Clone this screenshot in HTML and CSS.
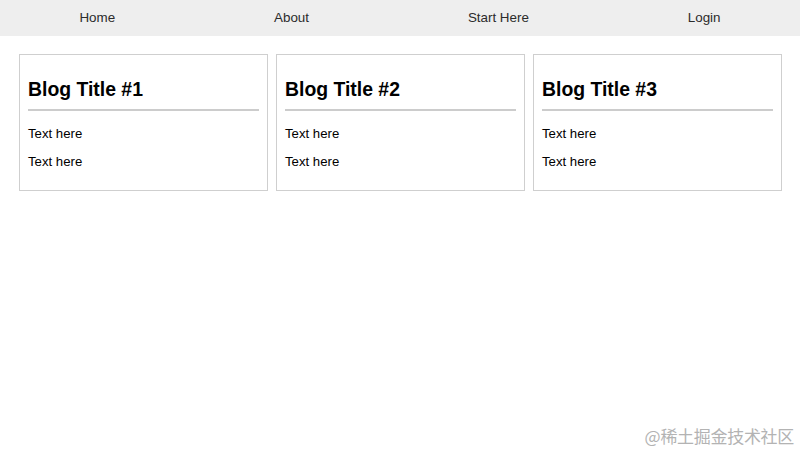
FILE: index.html
```html
<!DOCTYPE html>
<html lang="en">
<head>
<meta charset="utf-8">
<title>Blog</title>
<link rel="stylesheet" href="styles.css">
</head>
<body>
<nav class="topnav">
  <a class="nav-link" href="#">Home</a>
  <a class="nav-link" href="#">About</a>
  <a class="nav-link" href="#">Start Here</a>
  <a class="nav-link" href="#">Login</a>
</nav>
<main class="cards">
  <article class="card">
    <h2 class="card-title">Blog Title #1</h2>
    <p class="card-text">Text here</p>
    <p class="card-text">Text here</p>
  </article>
  <article class="card">
    <h2 class="card-title">Blog Title #2</h2>
    <p class="card-text">Text here</p>
    <p class="card-text">Text here</p>
  </article>
  <article class="card">
    <h2 class="card-title">Blog Title #3</h2>
    <p class="card-text">Text here</p>
    <p class="card-text">Text here</p>
  </article>
</main>
<div class="watermark">@稀土掘金技术社区</div>
</body>
</html>
```
FILE: styles.css
```css
html, body {
  margin: 0;
  padding: 0;
  background: #fff;
}
body {
  font-family: "Liberation Sans", Arial, sans-serif;
  font-size: 13.2px;
  color: #000;
  width: 800px;
  height: 453px;
  position: relative;
  overflow: hidden;
}
.topnav {
  display: flex;
  justify-content: space-around;
  align-items: center;
  height: 36px;
  background: #eeeeee;
}
.nav-link {
  color: #2b2b2b;
  text-decoration: none;
  font-size: 13.4px;
  line-height: 36px;
}
.cards {
  display: grid;
  grid-template-columns: repeat(3, 1fr);
  gap: 8px;
  padding: 18px 18px 0 19px;
}
.card {
  border: 1px solid #cfcfcf;
  padding: 8px 8px 9px;
}
.card-title {
  font-size: 19.4px;
  font-weight: bold;
  margin: 15px 0 15px 0;
  padding-bottom: 8px;
  border-bottom: 2px solid #cccccc;
  line-height: normal;
}
.card-text {
  margin: 12.6px 0;
  font-size: 13.2px;
}
.watermark {
  position: absolute;
  right: 6px;
  bottom: 5px;
  font-family: "Noto Sans CJK SC", "Liberation Sans", sans-serif;
  font-size: 17px;
  color: #b3b3b3;
  letter-spacing: -0.3px;
}
```
